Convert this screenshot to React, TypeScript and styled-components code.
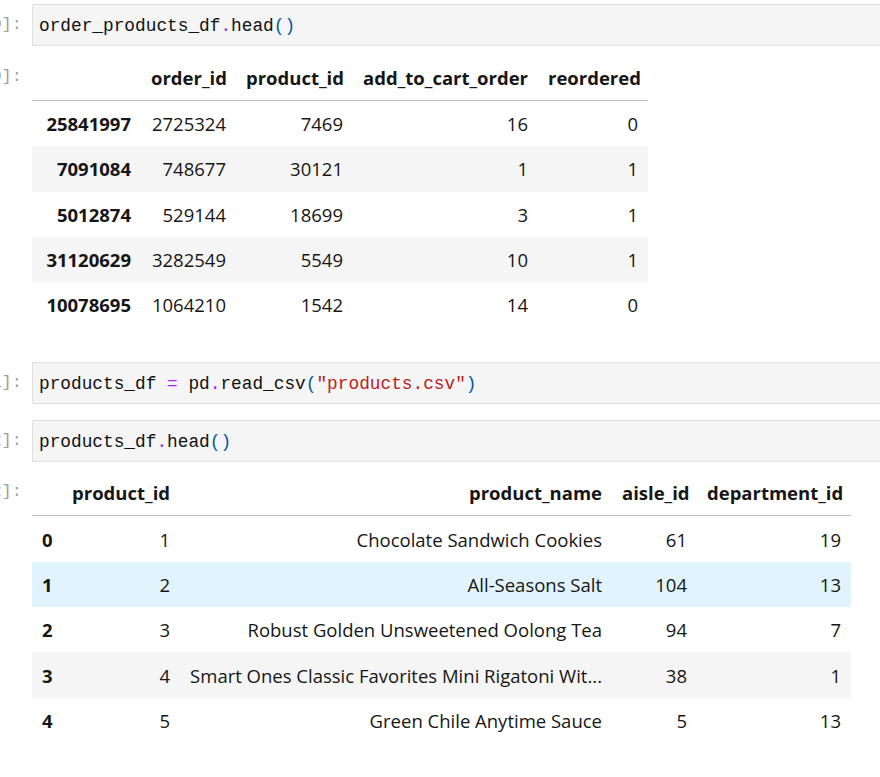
import React from "react";
import styled, { createGlobalStyle } from "styled-components";

const GlobalStyle = createGlobalStyle`
  html, body {
    margin: 0;
    padding: 0;
    background: #ffffff;
    overflow: hidden;
  }
`;

const Notebook = styled.div`
  width: 900px;
  padding-top: 4px;
  display: flex;
  flex-direction: column;
`;

const Cell = styled.div<{ $top: number }>`
  display: flex;
  flex-direction: row;
  align-items: flex-start;
  margin-top: ${(p) => p.$top}px;
`;

const Prompt = styled.div<{ $line: number }>`
  flex: 0 0 22px;
  margin-right: 10px;
  display: flex;
  justify-content: flex-end;
  overflow: hidden;
  white-space: nowrap;
  font-family: "Liberation Mono", "DejaVu Sans Mono", monospace;
  font-size: 17px;
  line-height: ${(p) => p.$line}px;
  color: #a0a0a0;
`;

const InputBox = styled.div`
  flex: 1;
  box-sizing: border-box;
  height: 42px;
  display: flex;
  align-items: center;
  padding: 1px 6px 0;
  background: #f5f5f5;
  border: 1px solid #e0e0e0;
  font-family: "Liberation Mono", "DejaVu Sans Mono", monospace;
  font-size: 17.8px;
  color: #111111;
  white-space: pre;
`;

const Op = styled.span`
  color: #aa22ff;
`;

const Paren = styled.span`
  color: #0055aa;
`;

const Str = styled.span`
  color: #ba2121;
`;

const Table = styled.table<{ $width: number }>`
  border-collapse: collapse;
  table-layout: fixed;
  width: ${(p) => p.$width}px;
  font-family: "Open Sans", "Noto Sans", sans-serif;
  font-size: 18.5px;
  color: #161616;
`;

const Col = styled.col<{ $w: number }>`
  width: ${(p) => p.$w}px;
`;

const HeadCell = styled.th`
  height: 45px;
  padding: 0 10px;
  text-align: right;
  font-weight: 700;
  white-space: nowrap;
  border-bottom: 1px solid #bdbdbd;
`;

const Row = styled.tr<{ $shade?: "stripe" | "hover" }>`
  background: ${(p) =>
    p.$shade === "stripe" ? "#f5f5f5" : p.$shade === "hover" ? "#e1f4fd" : "transparent"};
`;

const IndexCell = styled.th`
  height: 45.3px;
  padding: 0 10px;
  text-align: right;
  font-weight: 700;
  white-space: nowrap;
`;

const DataCell = styled.td`
  height: 45.3px;
  padding: 0 10px;
  text-align: right;
  white-space: nowrap;
  overflow: hidden;
`;

type TableData = {
  widths: number[];
  columns: string[];
  rows: (string | number)[][];
  shades: ("stripe" | "hover" | undefined)[];
};

const orderProducts: TableData = {
  widths: [109, 95, 117, 185, 110],
  columns: ["", "order_id", "product_id", "add_to_cart_order", "reordered"],
  rows: [
    [25841997, 2725324, 7469, 16, 0],
    [7091084, 748677, 30121, 1, 1],
    [5012874, 529144, 18699, 3, 1],
    [31120629, 3282549, 5549, 10, 1],
    [10078695, 1064210, 1542, 14, 0],
  ],
  shades: [undefined, "stripe", undefined, "stripe", undefined],
};

const products: TableData = {
  widths: [30, 118, 432, 85, 154],
  columns: ["", "product_id", "product_name", "aisle_id", "department_id"],
  rows: [
    [0, 1, "Chocolate Sandwich Cookies", 61, 19],
    [1, 2, "All-Seasons Salt", 104, 13],
    [2, 3, "Robust Golden Unsweetened Oolong Tea", 94, 7],
    [3, 4, "Smart Ones Classic Favorites Mini Rigatoni Wit...", 38, 1],
    [4, 5, "Green Chile Anytime Sauce", 5, 13],
  ],
  shades: [undefined, "hover", undefined, "stripe", undefined],
};

const DataFrame: React.FC<{ data: TableData }> = ({ data }) => {
  const total = data.widths.reduce((a, b) => a + b, 0);
  return (
    <Table $width={total}>
      <colgroup>
        {data.widths.map((w, i) => (
          <Col key={i} $w={w} />
        ))}
      </colgroup>
      <thead>
        <tr>
          {data.columns.map((c, i) => (
            <HeadCell key={i}>{c}</HeadCell>
          ))}
        </tr>
      </thead>
      <tbody>
        {data.rows.map((row, r) => (
          <Row key={r} $shade={data.shades[r]}>
            <IndexCell>{row[0]}</IndexCell>
            {row.slice(1).map((v, i) => (
              <DataCell key={i}>{v}</DataCell>
            ))}
          </Row>
        ))}
      </tbody>
    </Table>
  );
};

const App: React.FC = () => {
  return (
    <>
      <GlobalStyle />
      <Notebook>
        <Cell $top={0}>
          <Prompt $line={42}>[20]:</Prompt>
          <InputBox>
            order_products_df<Op>.</Op>head<Paren>()</Paren>
          </InputBox>
        </Cell>
        <Cell $top={9}>
          <Prompt $line={44}>[20]:</Prompt>
          <DataFrame data={orderProducts} />
        </Cell>
        <Cell $top={35}>
          <Prompt $line={42}>[21]:</Prompt>
          <InputBox>
            products_df <Op>=</Op> pd<Op>.</Op>read_csv<Paren>(</Paren>
            <Str>"products.csv"</Str>
            <Paren>)</Paren>
          </InputBox>
        </Cell>
        <Cell $top={16}>
          <Prompt $line={42}>[22]:</Prompt>
          <InputBox>
            products_df<Op>.</Op>head<Paren>()</Paren>
          </InputBox>
        </Cell>
        <Cell $top={8}>
          <Prompt $line={44}>[22]:</Prompt>
          <DataFrame data={products} />
        </Cell>
      </Notebook>
    </>
  );
};

export default App;
